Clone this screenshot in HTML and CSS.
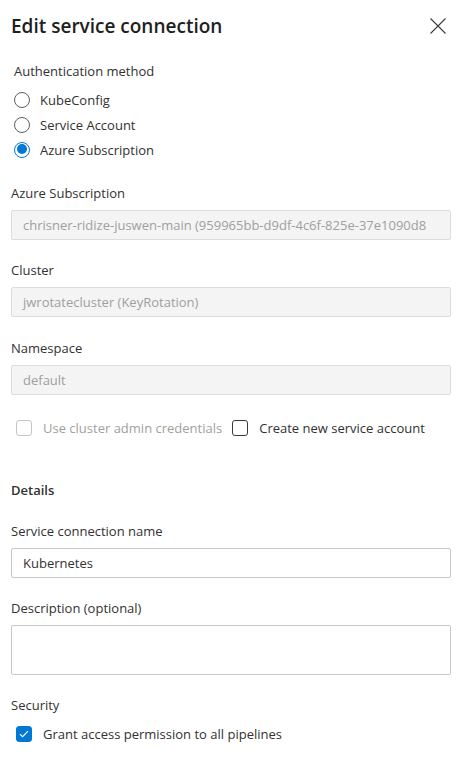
FILE: index.html
```html
<!DOCTYPE html>
<html lang="en">
<head>
<meta charset="utf-8">
<title>Edit service connection</title>
<link rel="stylesheet" href="styles.css">
</head>
<body>
<div class="panel">
  <header class="header">
    <h1 class="title">Edit service connection</h1>
    <button class="close" aria-label="Close">
      <svg width="16" height="16" viewBox="0 0 16 16"><path d="M0.5 0.5 L15.5 15.5 M15.5 0.5 L0.5 15.5" stroke="#3b3a39" stroke-width="1.1" fill="none"/></svg>
    </button>
  </header>

  <section class="auth">
    <div class="auth-label">Authentication method</div>
    <div class="radio-list">
      <div class="radio-row"><span class="radio"></span><span class="radio-text">KubeConfig</span></div>
      <div class="radio-row"><span class="radio"></span><span class="radio-text">Service Account</span></div>
      <div class="radio-row"><span class="radio checked"></span><span class="radio-text">Azure Subscription</span></div>
    </div>
  </section>

  <div class="field first">
    <div class="label">Azure Subscription</div>
    <div class="input disabled">chrisner-ridize-juswen-main (959965bb-d9df-4c6f-825e-37e1090d8</div>
  </div>
  <div class="field">
    <div class="label">Cluster</div>
    <div class="input disabled">jwrotatecluster (KeyRotation)</div>
  </div>
  <div class="field wide">
    <div class="label">Namespace</div>
    <div class="input disabled">default</div>
  </div>

  <div class="check-row options">
    <div class="check-item disabled"><span class="checkbox"></span><span class="check-text">Use cluster admin credentials</span></div>
    <div class="check-item"><span class="checkbox"></span><span class="check-text">Create new service account</span></div>
  </div>

  <div class="section-title">Details</div>
  <div class="field wide">
    <div class="label">Service connection name</div>
    <div class="input">Kubernetes</div>
  </div>
  <div class="field">
    <div class="label">Description (optional)</div>
    <div class="textarea"></div>
  </div>

  <div class="security-label">Security</div>
  <div class="check-row security">
    <div class="check-item"><span class="checkbox checked">
      <svg width="10" height="8" viewBox="0 0 10 8"><path d="M1 4.2 L3.6 6.6 L9 1.2" stroke="#fff" stroke-width="1.2" fill="none"/></svg>
    </span><span class="check-text">Grant access permission to all pipelines</span></div>
  </div>
</div>
</body>
</html>
```

FILE: styles.css
```css
* { box-sizing: border-box; }
html, body { margin: 0; padding: 0; background: #fff; }
body {
  font-family: "Open Sans", "Noto Sans", "Liberation Sans", sans-serif;
  font-size: 13px;
  color: #323130;
}
.panel { padding: 12px 11px 0 11px; }

.header {
  display: flex;
  justify-content: space-between;
  align-items: center;
  height: 28px;
}
.title {
  margin: 0;
  font-size: 19px;
  font-weight: 600;
  line-height: 28px;
  color: #201f1e;
}
.close {
  border: 0;
  background: transparent;
  padding: 0;
  width: 16px;
  height: 16px;
  margin-right: 5px;
  display: flex;
}

.auth { margin: 21px 0 0 3px; }
.auth-label { line-height: 20px; }
.radio-list { margin-top: 6px; }
.radio-row {
  display: flex;
  align-items: center;
  height: 25px;
  gap: 10px;
}
.radio {
  width: 16px;
  height: 16px;
  border: 1px solid #605e5c;
  border-radius: 50%;
  position: relative;
  flex: none;
}
.radio.checked { border: 1.5px solid #0078d4; }
.radio.checked::after {
  content: "";
  position: absolute;
  left: 1.5px;
  top: 1.5px;
  width: 10px;
  height: 10px;
  border-radius: 50%;
  background: #0078d4;
}

.field { margin-top: 20px; }
.field.first { margin-top: 21px; }
.field.wide { margin-top: 21px; }
.label { line-height: 20px; margin-bottom: 7px; }
.input {
  height: 30px;
  border: 1px solid #c8c8c8;
  border-radius: 2px;
  padding: 0 11px;
  line-height: 28px;
  white-space: nowrap;
  overflow: hidden;
}
.input.disabled {
  background: #f4f4f4;
  border-color: #dcdcdc;
  color: #a19f9d;
}
.textarea {
  height: 50px;
  border: 1px solid #c8c8c8;
  border-radius: 2px;
}

.check-row { display: flex; align-items: center; height: 20px; }
.check-row.options { margin-top: 23px; padding-left: 5px; gap: 10px; }
.check-row.security { margin-top: 9px; padding-left: 5px; }
.check-item { display: flex; align-items: center; gap: 11px; }
.checkbox {
  width: 16px;
  height: 16px;
  border: 1px solid #3b3a39;
  border-radius: 3px;
  display: flex;
  align-items: center;
  justify-content: center;
  flex: none;
}
.check-item.disabled .checkbox { border-color: #c8c6c4; }
.check-item.disabled .check-text { color: #a19f9d; }
.checkbox.checked { background: #0078d4; border-color: #0078d4; }

.section-title {
  margin-top: 42px;
  font-weight: 600;
  line-height: 20px;
}
.security-label { margin-top: 20px; line-height: 20px; }
```
